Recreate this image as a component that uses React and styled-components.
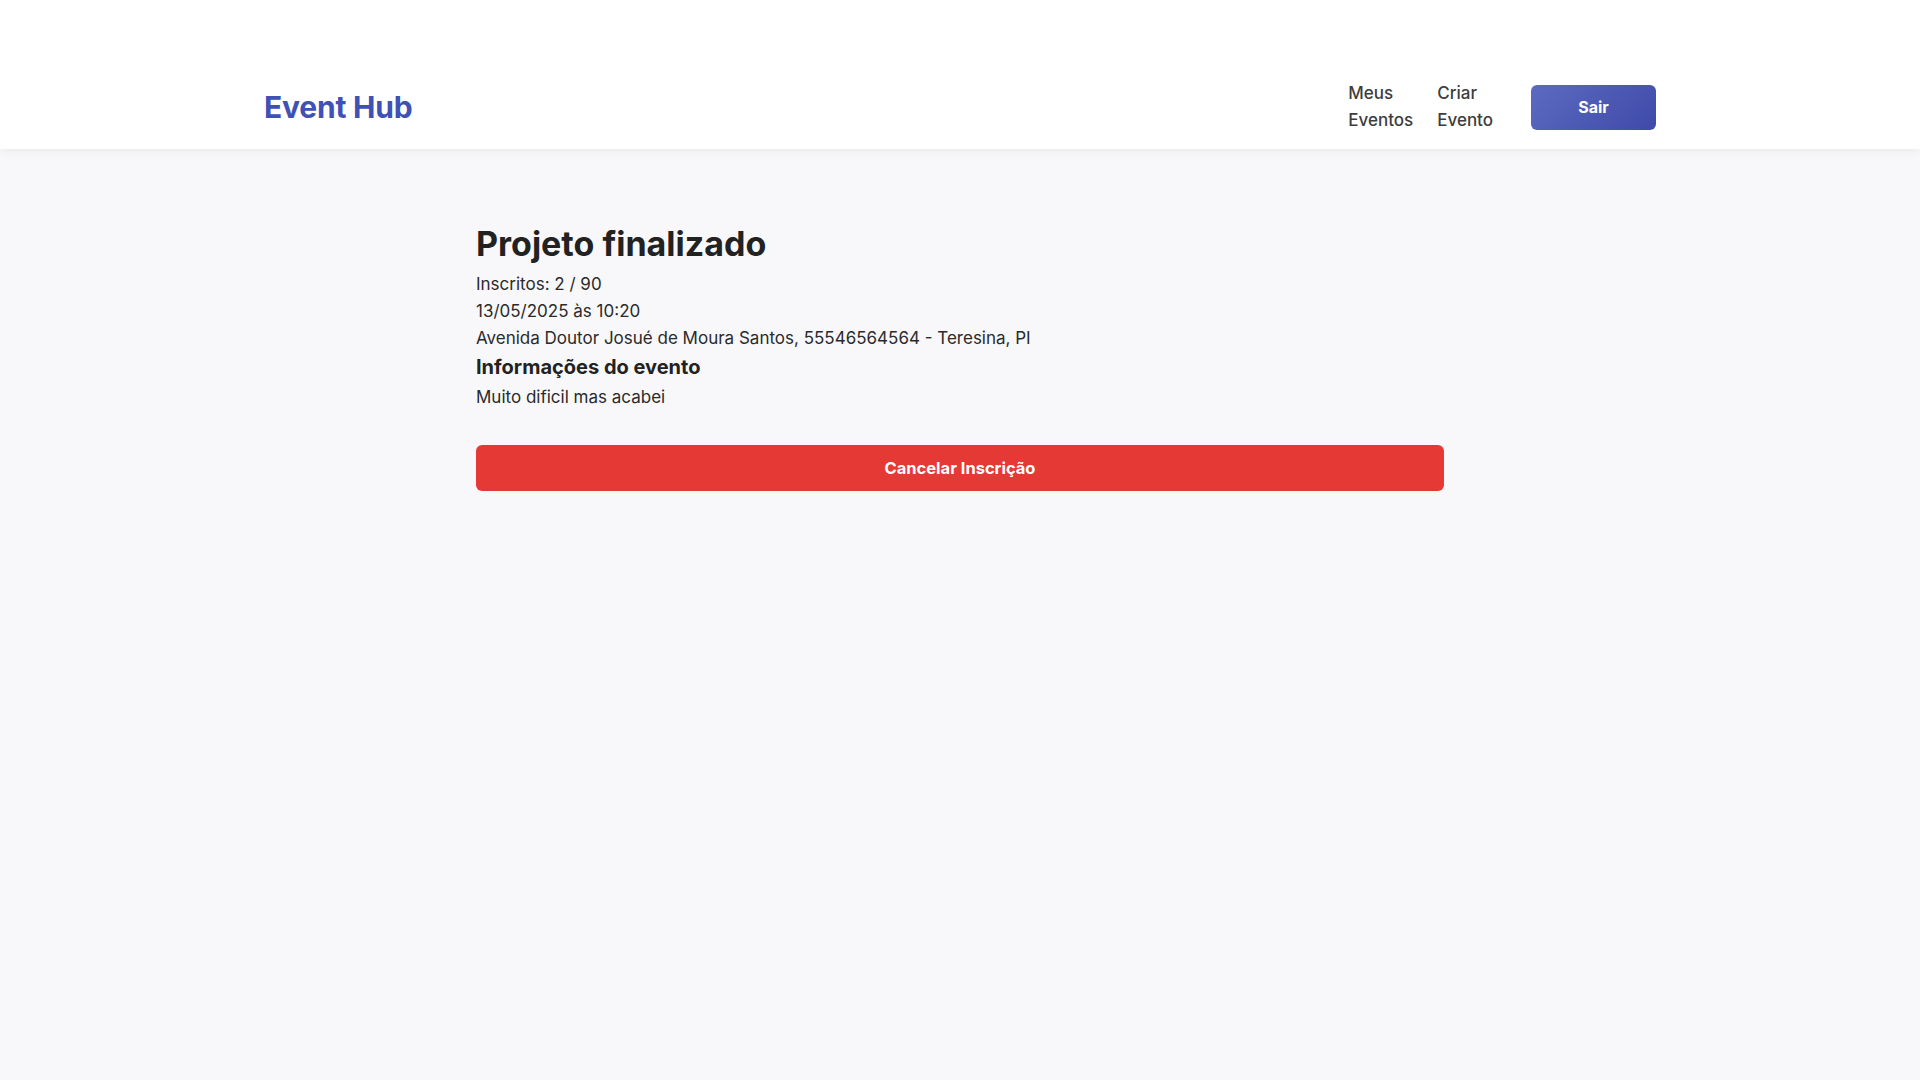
import React from "react";
import styled, { createGlobalStyle } from "styled-components";

const GlobalStyle = createGlobalStyle`
  * { box-sizing: border-box; }
  html, body { margin: 0; padding: 0; }
  body {
    font-family: Inter, "Noto Sans", "Liberation Sans", sans-serif;
    background: #f8f8fa;
    color: #2a2a2a;
    min-height: 100vh;
  }
`;

const Header = styled.header`
  background: #ffffff;
  box-shadow: 0 2px 10px rgba(0, 0, 0, 0.06);
  padding: 80px 0 15px;
  position: relative;
  z-index: 1;
`;

const HeaderInner = styled.div`
  max-width: 1440px;
  margin: 0 auto;
  padding: 0 24px;
  display: flex;
  align-items: center;
  justify-content: space-between;
`;

const Logo = styled.a`
  font-size: 30px;
  font-weight: 700;
  color: #3f51b5;
  text-decoration: none;
  letter-spacing: -0.2px;
`;

const Nav = styled.nav`
  display: flex;
  align-items: center;
`;

const NavLinks = styled.div`
  display: flex;
  gap: 24px;
  margin-right: 38px;
`;

const NavLink = styled.a`
  width: min-content;
  font-size: 17px;
  line-height: 27px;
  color: #3d3d3d;
  text-decoration: none;
  font-weight: 500;
`;

const LogoutButton = styled.button`
  width: 125px;
  height: 45px;
  border: none;
  border-radius: 6px;
  background: linear-gradient(135deg, #5c6bc0, #3f4aa9);
  color: #fff;
  font-family: inherit;
  font-weight: 700;
  font-size: 16px;
  cursor: pointer;
`;

const Main = styled.main`
  max-width: 1000px;
  margin: 0 auto;
  padding: 75px 16px 40px;
`;

const Title = styled.h1`
  margin: 0 0 6px;
  font-size: 34px;
  line-height: 1.2;
  font-weight: 700;
  color: #222;
`;

const Text = styled.p`
  margin: 0;
  font-size: 17px;
  line-height: 27px;
  color: #2a2a2a;
`;

const SubTitle = styled.h2`
  margin: 3px 0 5px;
  font-size: 20px;
  line-height: 1.2;
  font-weight: 700;
  color: #222;
`;

const CancelButton = styled.button`
  display: block;
  width: 100%;
  margin-top: 34px;
  height: 46px;
  border: none;
  border-radius: 6px;
  background: #e53935;
  color: #fff;
  font-family: inherit;
  font-weight: 700;
  font-size: 16.5px;
  cursor: pointer;
`;

export default function App() {
  return (
    <>
      <GlobalStyle />
      <Header>
        <HeaderInner>
          <Logo href="#">Event Hub</Logo>
          <Nav>
            <NavLinks>
              <NavLink href="#">Meus Eventos</NavLink>
              <NavLink href="#">Criar Evento</NavLink>
            </NavLinks>
            <LogoutButton>Sair</LogoutButton>
          </Nav>
        </HeaderInner>
      </Header>
      <Main>
        <Title>Projeto finalizado</Title>
        <Text>Inscritos: 2 / 90</Text>
        <Text>13/05/2025 às 10:20</Text>
        <Text>Avenida Doutor Josué de Moura Santos, 55546564564 - Teresina, PI</Text>
        <SubTitle>Informações do evento</SubTitle>
        <Text>Muito dificil mas acabei</Text>
        <CancelButton>Cancelar Inscrição</CancelButton>
      </Main>
    </>
  );
}
